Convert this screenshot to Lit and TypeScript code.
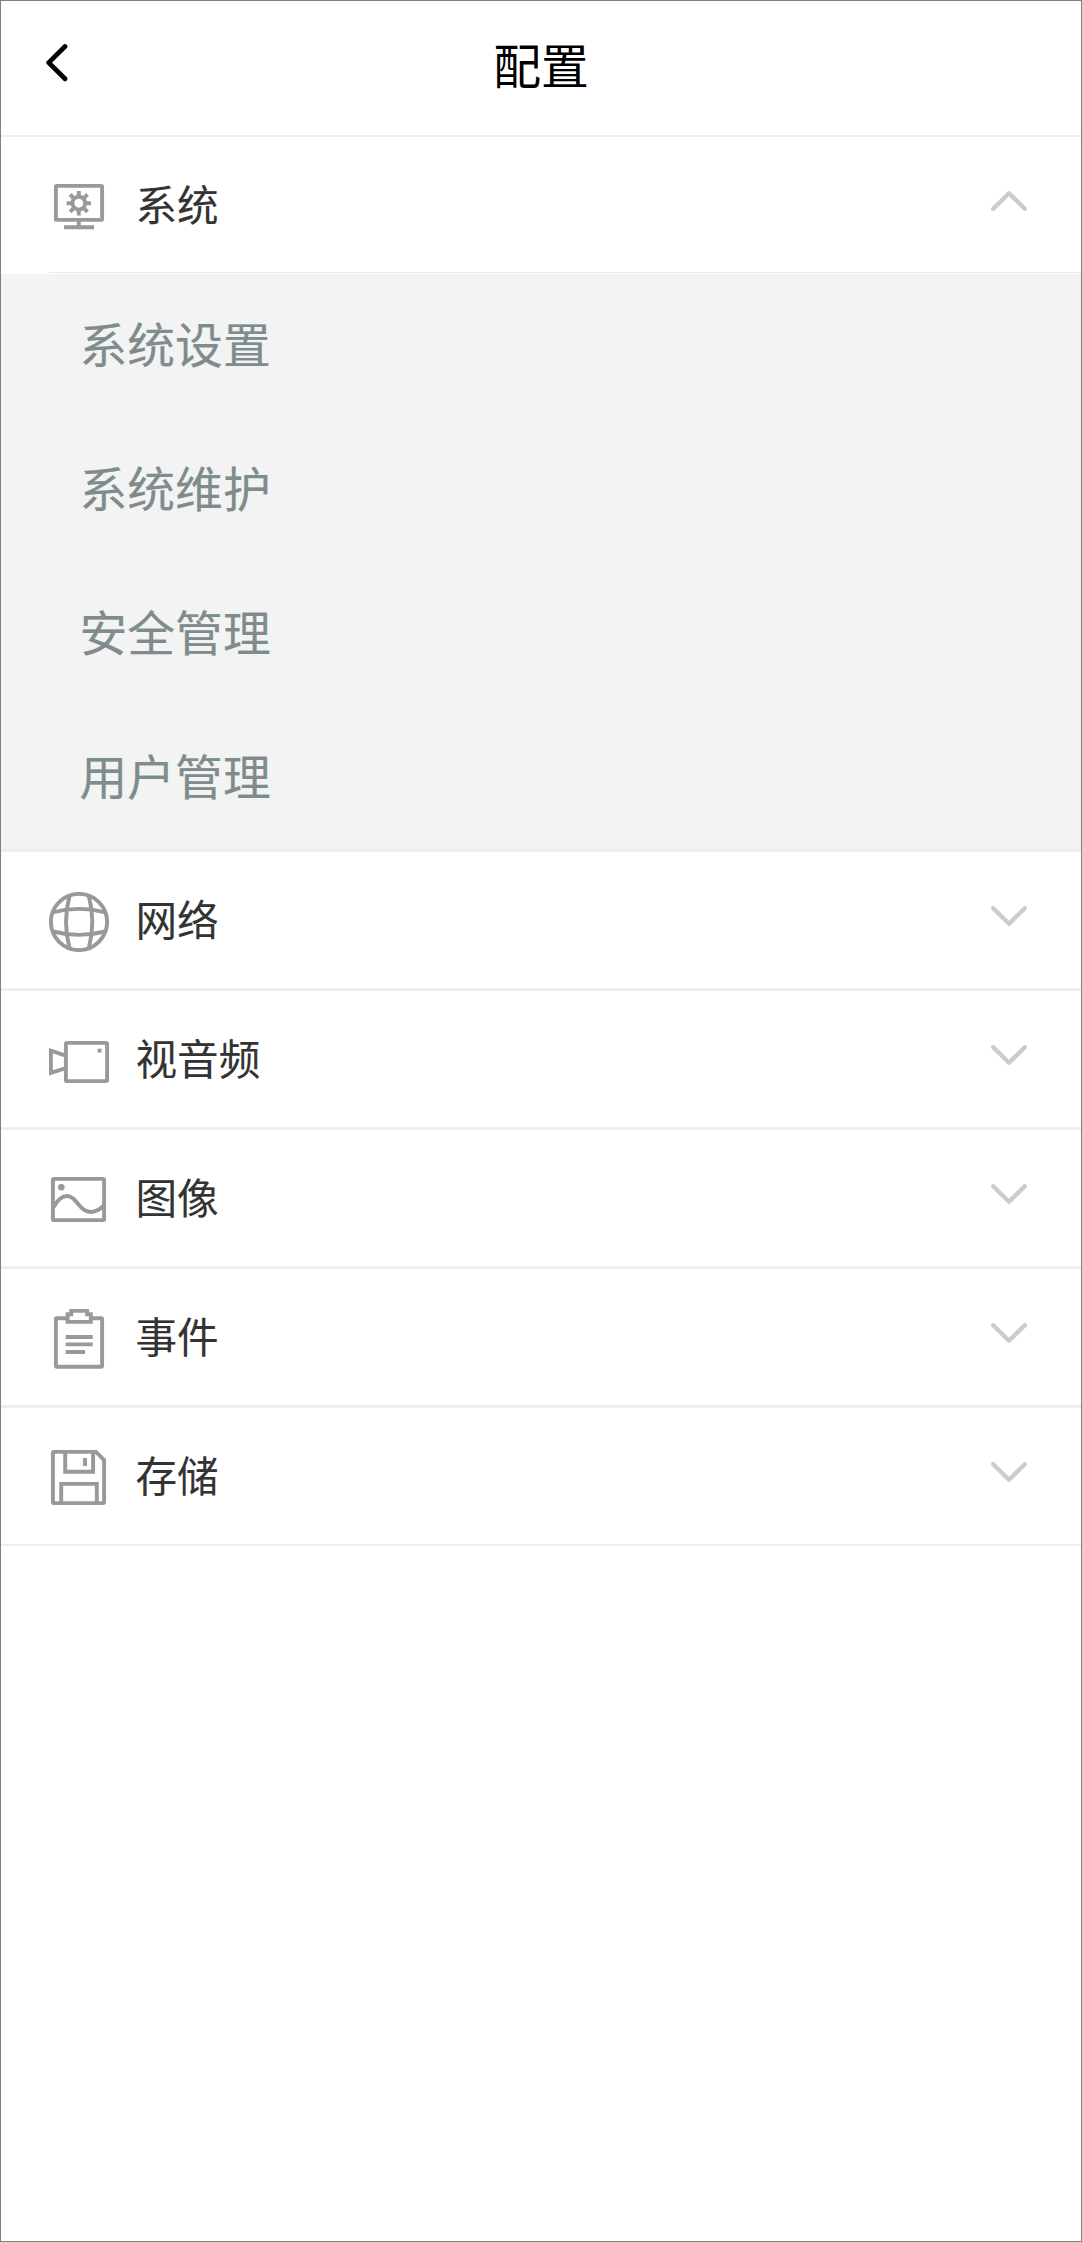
import { LitElement, html, css, svg } from "lit";
import { customElement, property } from "lit/decorators.js";
import { classMap } from "lit/directives/class-map.js";

const icons = {
  system: svg`
    <rect x="6.9" y="8.9" width="46.2" height="34" rx="1"/>
    <path d="M29.8 43v7M15 50.2h30"/>
    <circle cx="29.8" cy="26.2" r="6.4"/>
    <path d="M29.8 14v5M29.8 33.4v5M17.6 26.2h5M37 26.2h5M21.1 17.5l3.4 3.4M35.1 31.5l3.4 3.4M38.5 17.5l-3.4 3.4M24.5 31.5l-3.4 3.4"/>`,
  network: svg`
    <circle cx="30" cy="30" r="28.1"/>
    <path d="M20.5 4Q13.5 30 20.5 56M39.8 4Q46.8 30 39.8 56M4 20.3Q30 13.5 56 20.3M4 39.5Q30 46.3 56 39.5"/>`,
  video: svg`
    <rect x="16.9" y="11.9" width="41.2" height="38.2" rx="1.2"/>
    <path d="M16 24.4L1.9 19.6v22.2L16 37.4"/>
    <rect class="solid" x="48.7" y="17.7" width="3.8" height="3.8"/>`,
  image: svg`
    <rect x="3.9" y="8.9" width="51.2" height="41.2" rx="1.2"/>
    <circle class="solid" cx="12.3" cy="17.3" r="3.3"/>
    <path d="M4.500 37.500C9 29 13.500 26 17.800 26C23 26 26 30 30 35C34 40 37 42 42 42C46.500 42 50.500 39.800 55 35.500"/>`,
  event: svg`
    <path d="M17 9.200H7.900Q6.900 9.200 6.900 10.200V56.800Q6.900 57.800 7.900 57.800H52.100Q53.100 57.800 53.100 56.800V10.200Q53.100 9.200 52.100 9.200H43"/>
    <path d="M18.600 12.900V5.200H22.200V1.900H38.100V5.200H41.800V12.900Z"/>
    <path d="M16.700 28H43.700M16.700 35.400H43.700M16.700 43H36"/>`,
  storage: svg`
    <path d="M4.900 3.900H47L55.100 12.100V54.100Q55.100 55.100 54.100 55.100H4.900Q3.900 55.100 3.900 54.100V4.900Q3.900 3.900 4.900 3.900Z"/>
    <path d="M16.200 4V23.800H44.100V4M12.200 55V35.900H47.800V55M36 10V18"/>`,
};

interface Section {
  icon: keyof typeof icons;
  label: string;
  children?: string[];
}

const sections: Section[] = [
  { icon: "system", label: "系统", children: ["系统设置", "系统维护", "安全管理", "用户管理"] },
  { icon: "network", label: "网络" },
  { icon: "video", label: "视音频" },
  { icon: "image", label: "图像" },
  { icon: "event", label: "事件" },
  { icon: "storage", label: "存储" },
];

@customElement("menu-section")
class MenuSection extends LitElement {
  @property({ attribute: false }) section!: Section;

  static styles = css`
    :host { display: block; }
    .row {
      display: flex;
      align-items: center;
      height: 136px;
      padding: 0 54px 0 48px;
      border-bottom: 3px solid #eeeef1;
    }
    :host(:last-of-type) .row { border-bottom: 2px solid #eeeeee; }
    .row.open { height: 135px; padding-left: 0; margin-left: 48px; border-bottom: 1px solid #ebebeb; }
    .icon {
      flex: none;
      width: 60px;
      height: 60px;
      margin-top: 4px;
      fill: none;
      stroke: #999;
      stroke-width: 3.9;
    }
    .open .icon { margin-top: 5px; }
    .solid { fill: #999; stroke: none; }
    .label {
      flex: 1;
      margin: 0 0 4px 26.500px;
      font-size: 41.600px;
      line-height: 60px;
      color: #333;
      -webkit-text-stroke: 0.1px #333;
    }
    .open .label { margin-bottom: 3px; }
    .chevron {
      width: 36px;
      height: 20px;
      margin-bottom: 8px;
      fill: none;
      stroke: #ccc;
      stroke-width: 4.4;
      stroke-linecap: round;
      stroke-linejoin: round;
    }
    .open .chevron { transform: scaleY(-1); margin-bottom: 7px; }
    .children { margin-top: 1px; background: #f3f3f3; border-bottom: 3px solid #eeeef1; }
    .child {
      height: 144px;
      line-height: 138px;
      padding-left: 78.500px;
      font-size: 47.800px;
      color: #7f8c8d;
      -webkit-text-stroke: 0.2px #7f8c8d;
    }
    .child:last-child { height: 143px; }
  `;

  render() {
    const { icon, label, children } = this.section;
    return html`
      <div class=${classMap({ row: true, open: !!children })}>
        <svg class="icon" viewBox="0 0 60 60">${icons[icon]}</svg>
        <span class="label">${label}</span>
        <svg class="chevron" viewBox="0 0 36 20"><path d="M2.200 2.200L18 17.700L33.800 2.200"/></svg>
      </div>
      ${children
        ? html`<div class="children">${children.map((c) => html`<div class="child">${c}</div>`)}</div>`
        : null}
    `;
  }
}

@customElement("app-root")
class AppRoot extends LitElement {
  static styles = css`
    :host {
      display: block;
      box-sizing: border-box;
      height: 2242px;
      border: 1px solid #808080;
      background: #fff;
      font-family: "Noto Sans CJK SC", sans-serif;
    }
    .header {
      display: grid;
      grid-template-columns: 100px 1fr 100px;
      height: 134px;
      border-bottom: 2px solid #ededf0;
    }
    .back {
      width: 24px;
      height: 40px;
      margin: 41px 0 0 44px;
      fill: none;
      stroke: #000;
      stroke-width: 4.8;
      stroke-linecap: round;
      stroke-linejoin: round;
    }
    .title { margin: 0; font-size: 47.800px; font-weight: 400; line-height: 125px; text-align: center; color: #000; }
  `;

  render() {
    return html`
      <header class="header">
        <svg class="back" viewBox="0 0 24 40"><path d="M20 4.500L3.700 20.600L20 36.700"/></svg>
        <h1 class="title">配置</h1>
      </header>
      ${sections.map((s) => html`<menu-section .section=${s}></menu-section>`)}
    `;
  }
}
